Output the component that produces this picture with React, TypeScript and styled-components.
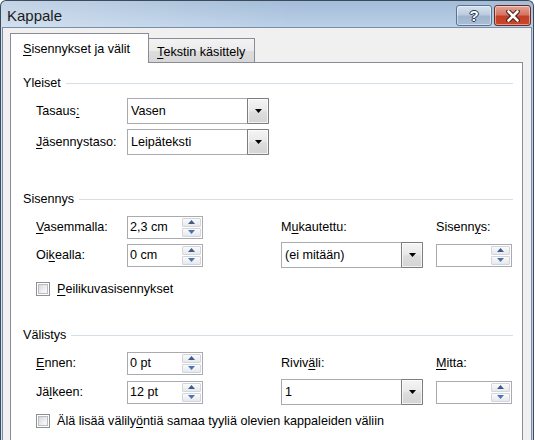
import React from 'react';
import styled, { createGlobalStyle } from 'styled-components';

const Global = createGlobalStyle`
  html, body { margin: 0; padding: 0; background: #ffffff; }
  body {
    font-family: "Segoe UI", "Liberation Sans", Arial, sans-serif;
    font-size: 12.6px;
    color: #000000;
  }
  * { box-sizing: border-box; }
`;

const Window = styled.div`
  width: 534px;
  height: 440px;
  overflow: hidden;
  border: 1px solid #3d4a5a;
  border-bottom: none;
  border-radius: 6px 6px 0 0;
  background:
    linear-gradient(to right, rgba(255, 255, 255, 0.35), rgba(255, 255, 255, 0) 55%),
    linear-gradient(#a3bcd8, #bad0e8 26px, #bcd1e8);
  display: flex;
  flex-direction: column;
`;

const TitleBar = styled.div`
  height: 26px;
  flex: none;
  display: flex;
  align-items: flex-start;
  padding: 0 2px 0 6px;
`;

const TitleText = styled.div`
  flex: 1;
  font-size: 15px;
  line-height: 18px;
  padding-top: 6px;
  color: #1b1b1b;
`;

const CaptionButtons = styled.div`
  display: flex;
  gap: 2px;
  margin-top: 4px;
`;

const CaptionButton = styled.div<{ $close?: boolean }>`
  width: ${(p) => (p.$close ? 37 : 36)}px;
  height: 21px;
  border: 1px solid ${(p) => (p.$close ? '#6e2a20' : '#5d7190')};
  border-radius: 3px;
  background: ${(p) =>
    p.$close
      ? 'linear-gradient(#e3a597 0%, #d57563 45%, #c33f26 55%, #c7472c 100%)'
      : 'linear-gradient(#d6e2ef 0%, #bccce0 45%, #9fb5ce 55%, #a9bed6 100%)'};
  box-shadow: inset 0 0 0 1px rgba(255, 255, 255, 0.45);
  display: flex;
  align-items: center;
  justify-content: center;
`;

const HelpGlyph = styled.span`
  font-family: "Liberation Sans", Arial, sans-serif;
  font-weight: bold;
  font-size: 15px;
  line-height: 15px;
  color: #ffffff;
  text-shadow: 0 0 1px #2a3a50, 0 0 1px #2a3a50, 1px 0 0 #2a3a50, -1px 0 0 #2a3a50, 0 1px 0 #2a3a50, 0 -1px 0 #2a3a50;
`;

const Client = styled.div`
  flex: 1;
  margin: 0 1px;
  border: 1px solid #7a8da5;
  border-bottom: none;
  background: #f0f0f0;
  padding: 5px 8px 0 7px;
  display: flex;
  flex-direction: column;
`;

const TabStrip = styled.div`
  display: flex;
  align-items: flex-end;
  height: 29px;
  flex: none;
`;

const Tab = styled.div<{ $active?: boolean }>`
  position: relative;
  z-index: ${(p) => (p.$active ? 2 : 1)};
  height: ${(p) => (p.$active ? 30 : 24)}px;
  margin-bottom: ${(p) => (p.$active ? -1 : 0)}px;
  margin-left: ${(p) => (p.$active ? 0 : -1)}px;
  border: 1px solid #898c95;
  border-bottom: none;
  background: ${(p) =>
    p.$active ? '#ffffff' : 'linear-gradient(#f3f3f3 0%, #ebebeb 50%, #dedede 50%, #d6d6d6 100%)'};
  padding: ${(p) => (p.$active ? '7px 18px 0 12px' : '5px 9px 0 8px')};
  line-height: 16px;
  white-space: nowrap;
`;

const Panel = styled.div`
  flex: 1;
  border: 1px solid #898c95;
  border-bottom: none;
  background: #ffffff;
  padding: 13px 9px 0 12px;
`;

const Group = styled.section<{ $top: number }>`
  margin-top: ${(p) => p.$top}px;
`;

const GroupTitle = styled.div`
  display: flex;
  align-items: center;
  gap: 5px;
  height: 14px;
  line-height: 14px;
  white-space: nowrap;
  &::after {
    content: '';
    flex: 1;
    height: 1px;
    background: #d5dfe5;
  }
`;

const FieldGrid = styled.div<{ $cols: string; $rows: string; $gap: number; $top: number }>`
  display: grid;
  grid-template-columns: ${(p) => p.$cols};
  grid-template-rows: ${(p) => p.$rows};
  row-gap: ${(p) => p.$gap}px;
  align-items: center;
  margin-top: ${(p) => p.$top}px;
  padding-left: 13px;
`;

const Label = styled.span<{ $col: number }>`
  grid-column: ${(p) => p.$col};
  white-space: nowrap;
  line-height: 15px;
`;

const Acc = styled.span`
  text-decoration: underline;
  text-underline-offset: 2px;
  text-decoration-thickness: 1px;
`;

const Cell = styled.div<{ $col: number }>`
  grid-column: ${(p) => p.$col};
  display: flex;
`;

const Combo = styled.div<{ $w: number }>`
  width: ${(p) => p.$w}px;
  height: 26px;
  border: 1px solid #a9abb0;
  background: #ffffff;
  display: flex;
  align-items: center;
`;

const ComboText = styled.span`
  flex: 1;
  padding-left: 3px;
  white-space: nowrap;
`;

const ComboButton = styled.div`
  align-self: stretch;
  width: 22px;
  margin: -1px -1px -1px 0;
  border: 1px solid #7d7d7d;
  border-radius: 1px;
  background: linear-gradient(#f4f4f4 0%, #eaeaea 45%, #dddddd 55%, #d4d4d4 100%);
  box-shadow: inset 0 0 0 1px rgba(255, 255, 255, 0.7);
  display: flex;
  align-items: center;
  justify-content: center;
`;

const Spinner = styled.div`
  width: 76px;
  height: 23px;
  border: 1px solid #a9abb0;
  background: #ffffff;
  display: flex;
  align-items: stretch;
  padding: 1px 1px 1px 0;
`;

const SpinValue = styled.span`
  flex: 1;
  padding-left: 2px;
  display: flex;
  align-items: center;
  white-space: nowrap;
`;

const SpinButtons = styled.div`
  width: 19px;
  display: flex;
  flex-direction: column;
  gap: 1px;
`;

const SpinButton = styled.div`
  flex: 1;
  border: 1px solid #d2d6dc;
  border-radius: 1px;
  background: linear-gradient(#fbfbfb, #e6e8ec);
  display: flex;
  align-items: center;
  justify-content: center;
`;

const CheckRow = styled.label<{ $top: number }>`
  display: flex;
  align-items: center;
  gap: 7px;
  margin-top: ${(p) => p.$top}px;
  padding-left: 13px;
  height: 14px;
  white-space: nowrap;
  line-height: 15px;
`;

const CheckBox = styled.span`
  width: 14px;
  height: 14px;
  flex: none;
  border: 1px solid #8e8f8f;
  background: #ffffff;
  padding: 1px;
  display: flex;
`;

const CheckInner = styled.span`
  flex: 1;
  border: 1px solid #b9bcc0;
  background: linear-gradient(135deg, #d6d8db 0%, #eef0f2 60%, #fafafa 100%);
`;

const Arrow = ({ dir, color }: { dir: 'up' | 'down'; color: string }) => (
  <svg width="7" height="4" viewBox="0 0 7 4">
    <polygon points={dir === 'up' ? '3.5,0 7,4 0,4' : '0,0 7,0 3.5,4'} fill={color} />
  </svg>
);

const DropDown = ({ w, value }: { w: number; value: string }) => (
  <Combo $w={w}>
    <ComboText>{value}</ComboText>
    <ComboButton>
      <svg width="7" height="4" viewBox="0 0 7 4">
        <polygon points="0,0 7,0 3.5,4" fill="#000" />
      </svg>
    </ComboButton>
  </Combo>
);

const Spin = ({ value }: { value: string }) => (
  <Spinner>
    <SpinValue>{value}</SpinValue>
    <SpinButtons>
      <SpinButton>
        <Arrow dir="up" color="#3e5a8c" />
      </SpinButton>
      <SpinButton>
        <Arrow dir="down" color="#4b73b4" />
      </SpinButton>
    </SpinButtons>
  </Spinner>
);

const Check = ({ top, children }: { top: number; children: React.ReactNode }) => (
  <CheckRow $top={top}>
    <CheckBox>
      <CheckInner />
    </CheckBox>
    <span>{children}</span>
  </CheckRow>
);

const WIDE_COLS = '91px 76px 78px 142px 13px 76px';

export default function App() {
  return (
    <>
      <Global />
      <Window>
        <TitleBar>
          <TitleText>Kappale</TitleText>
          <CaptionButtons>
            <CaptionButton>
              <HelpGlyph>?</HelpGlyph>
            </CaptionButton>
            <CaptionButton $close>
              <svg width="14" height="12" viewBox="0 0 14 12">
                <path d="M2.5 1.5 L11.5 10.5 M11.5 1.5 L2.5 10.5" stroke="#4a1a12" strokeWidth="4.6" strokeLinecap="round" />
                <path d="M2.5 1.5 L11.5 10.5 M11.5 1.5 L2.5 10.5" stroke="#ffffff" strokeWidth="2.6" strokeLinecap="round" />
              </svg>
            </CaptionButton>
          </CaptionButtons>
        </TitleBar>
        <Client>
          <TabStrip>
            <Tab $active>
              <Acc>S</Acc>isennykset ja välit
            </Tab>
            <Tab>
              <Acc>T</Acc>ekstin käsittely
            </Tab>
          </TabStrip>
          <Panel>
            <Group $top={0}>
              <GroupTitle>Yleiset</GroupTitle>
              <FieldGrid $cols="91px 142px" $rows="26px 26px" $gap={5} $top={8}>
                <Label $col={1}>
                  Tasaus<Acc>:</Acc>
                </Label>
                <Cell $col={2}>
                  <DropDown w={142} value="Vasen" />
                </Cell>
                <Label $col={1}>
                  <Acc>J</Acc>äsennystaso:
                </Label>
                <Cell $col={2}>
                  <DropDown w={142} value="Leipäteksti" />
                </Cell>
              </FieldGrid>
            </Group>

            <Group $top={37}>
              <GroupTitle>Sisennys</GroupTitle>
              <FieldGrid $cols={WIDE_COLS} $rows="22px 26px" $gap={4} $top={10}>
                <Label $col={1}>
                  <Acc>V</Acc>asemmalla:
                </Label>
                <Cell $col={2}>
                  <Spin value="2,3 cm" />
                </Cell>
                <Label $col={4}>
                  M<Acc>u</Acc>kautettu:
                </Label>
                <Label $col={6}>
                  Sisenn<Acc>y</Acc>s:
                </Label>
                <Label $col={1}>
                  Oi<Acc>k</Acc>ealla:
                </Label>
                <Cell $col={2}>
                  <Spin value="0 cm" />
                </Cell>
                <Cell $col={4}>
                  <DropDown w={142} value="(ei mitään)" />
                </Cell>
                <Cell $col={6}>
                  <Spin value="" />
                </Cell>
              </FieldGrid>
              <Check top={14}>
                <Acc>P</Acc>eilikuvasisennykset
              </Check>
            </Group>

            <Group $top={32}>
              <GroupTitle>Välistys</GroupTitle>
              <FieldGrid $cols={WIDE_COLS} $rows="22px 26px" $gap={5} $top={10}>
                <Label $col={1}>
                  <Acc>E</Acc>nnen:
                </Label>
                <Cell $col={2}>
                  <Spin value="0 pt" />
                </Cell>
                <Label $col={4}>
                  Riviv<Acc>ä</Acc>li:
                </Label>
                <Label $col={6}>
                  <Acc>M</Acc>itta:
                </Label>
                <Label $col={1}>
                  Jä<Acc>l</Acc>keen:
                </Label>
                <Cell $col={2}>
                  <Spin value="12 pt" />
                </Cell>
                <Cell $col={4}>
                  <DropDown w={142} value="1" />
                </Cell>
                <Cell $col={6}>
                  <Spin value="" />
                </Cell>
              </FieldGrid>
              <Check top={9}>
                Älä lisää välily<Acc>ö</Acc>ntiä samaa tyyliä olevien kappaleiden väliin
              </Check>
            </Group>
          </Panel>
        </Client>
      </Window>
    </>
  );
}
